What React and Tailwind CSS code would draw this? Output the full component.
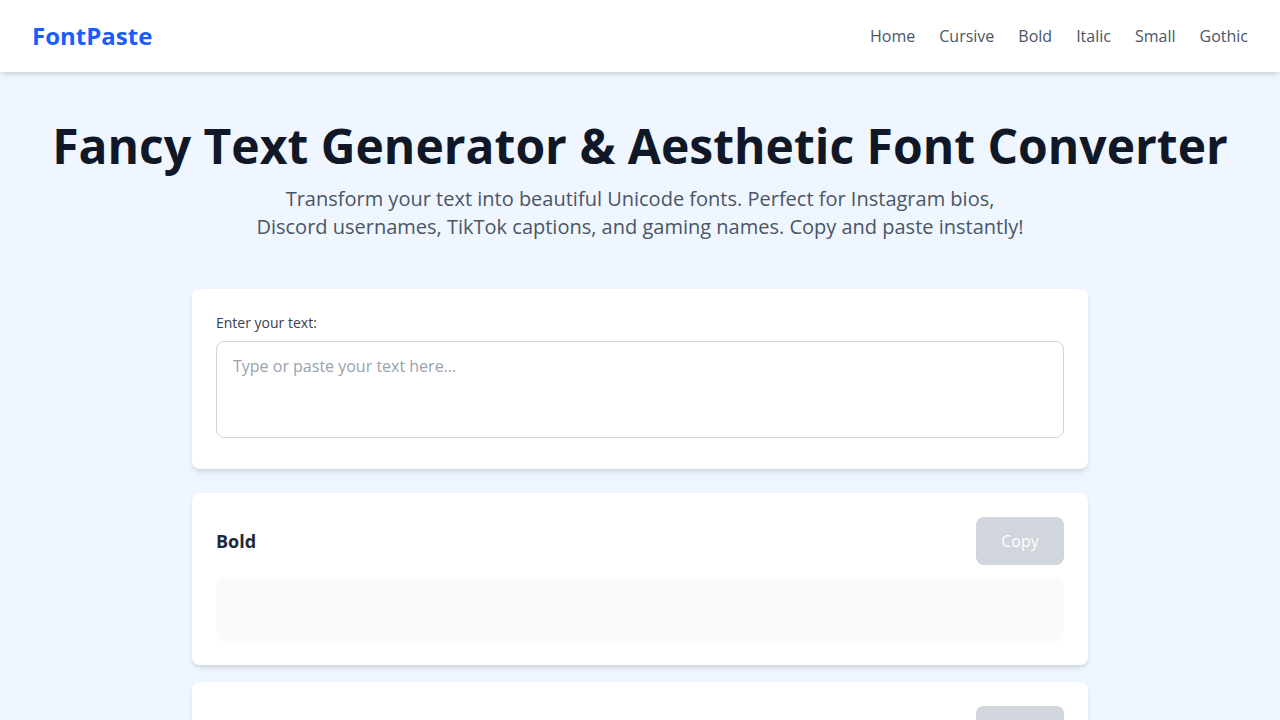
import React from 'react'

const navLinks = ['Home', 'Cursive', 'Bold', 'Italic', 'Small', 'Gothic']

const ResultCard = ({ title }) => (
  <div className="rounded-lg bg-white p-6 shadow-md">
    <div className="flex items-center justify-between">
      <h3 className="text-lg font-bold text-gray-800">{title}</h3>
      <button className="h-12 w-[88px] cursor-not-allowed rounded-lg bg-gray-300 text-base text-white">Copy</button>
    </div>
    <div className="mt-3 h-16 rounded-lg bg-gray-50"></div>
  </div>
)

export default function App() {
  return (
    <div className="min-h-screen bg-blue-50 font-['Open_Sans','Noto_Sans',sans-serif]">
      {/* header */}
      <header className="relative z-10 bg-white shadow-md">
        <div className="flex h-[72px] items-center justify-between px-8">
          <a className="text-2xl font-bold text-[#1a5cff]">FontPaste</a>
          <nav className="flex gap-6">
            {navLinks.map((l) => (
              <a key={l} className="text-base text-gray-600">{l}</a>
            ))}
          </nav>
        </div>
      </header>

      <main className="px-4 pt-[50px]">
        <section className="text-center">
          <h1 className="text-5xl leading-none font-bold text-gray-900">Fancy Text Generator &amp; Aesthetic Font Converter</h1>
          <p className="mx-auto mt-[15px] max-w-3xl text-xl text-gray-600">
            Transform your text into beautiful Unicode fonts. Perfect for Instagram bios, Discord usernames, TikTok captions, and gaming names. Copy and paste instantly!
          </p>
        </section>

        <div className="mx-auto mt-12 max-w-4xl">
          <div className="mb-6 rounded-lg bg-white p-6 pb-[31px] shadow-md">
            <label className="mb-2 block text-sm text-gray-700">Enter your text:</label>
            <textarea
              className="block h-[97px] w-full resize-none rounded-lg border border-gray-300 px-4 py-3 text-base text-gray-800 outline-none placeholder:text-gray-400"
              placeholder="Type or paste your text here..."
            />
          </div>

          <div className="space-y-[17px]">
            <ResultCard title="Bold" />
            <ResultCard title="Italic" />
          </div>
        </div>
      </main>
    </div>
  )
}
